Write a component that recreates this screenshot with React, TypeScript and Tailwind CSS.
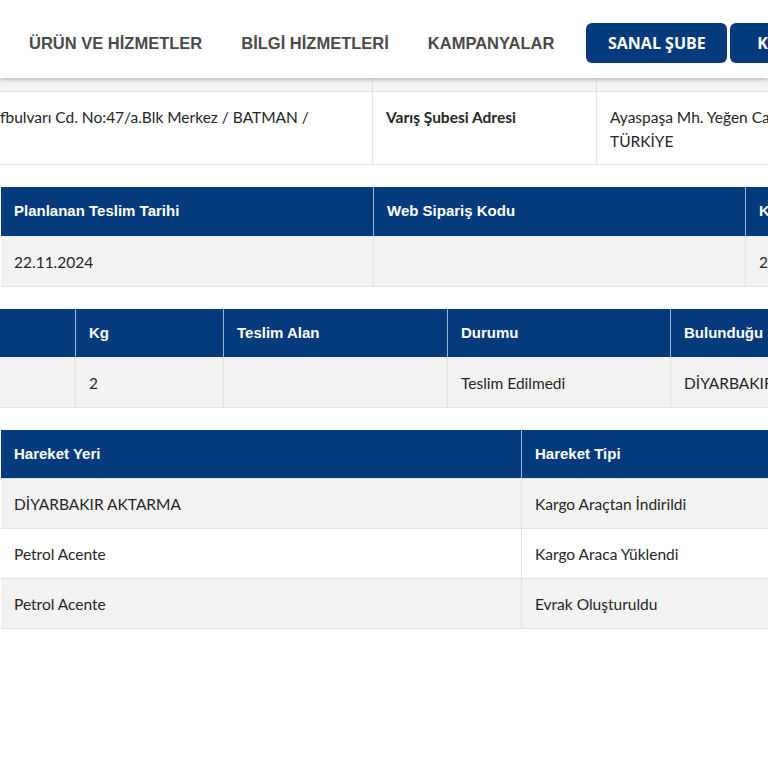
import React from "react";

const HEAD =
  "bg-[#053b7c] text-white font-bold text-[15px] leading-6 px-[13px] py-3 border-l border-[#9fb4d3] first:border-l-0 whitespace-nowrap";
const HEAD_TALL =
  "bg-[#053b7c] text-white font-bold text-[15px] leading-6 px-[13px] pt-[12px] pb-[13px] border-l border-[#9fb4d3] first:border-l-0 whitespace-nowrap";
const CELL =
  "px-[13px] pt-[14px] pb-[12px] text-[15.5px] leading-6 text-[#262626] border-l border-[#e2e2e2] first:border-l-0 whitespace-nowrap";
const ROW_CELL =
  "px-[13px] pt-[13px] pb-[12px] text-[15.5px] leading-6 text-[#262626] border-l border-[#e2e2e2] first:border-l-0 whitespace-nowrap";
const HEAD_FONT = { fontFamily: '"Liberation Sans", Arial, sans-serif' };

function Nav() {
  return (
    <header
      className="relative z-10 h-[78px] bg-white shadow-[0_2px_4px_rgba(0,0,0,0.22)] flex items-center pt-[8px]"
      style={{ fontFamily: '"Liberation Sans", Arial, sans-serif' }}
    >
      <nav className="flex items-center pl-[29px] gap-[39px] text-[16.5px] font-bold text-[#4a4a4a] whitespace-nowrap">
        <span>ÜRÜN VE HİZMETLER</span>
        <span>BİLGİ HİZMETLERİ</span>
        <span>KAMPANYALAR</span>
      </nav>
      <div className="flex items-center gap-[3px] ml-[32px] whitespace-nowrap">
        <span
          className="h-10 w-[141px] rounded-[6px] bg-[#053b7c] text-white font-bold text-[16px] flex items-center justify-center"
          style={{ fontFamily: '"Open Sans", sans-serif' }}
        >
          SANAL ŞUBE
        </span>
        <span
          className="h-10 w-[141px] rounded-[6px] bg-[#053b7c] text-white font-bold text-[16px] flex items-center pl-[27px]"
          style={{ fontFamily: '"Open Sans", sans-serif' }}
        >
          KURUMSAL
        </span>
      </div>
    </header>
  );
}

export default function App() {
  return (
    <div
      className="w-[768px] h-[768px] overflow-hidden bg-white"
      style={{ fontFamily: 'Lato, "Noto Sans", sans-serif' }}
    >
      <Nav />

      {/* address block */}
      <div className="w-[1100px]">
        <div className="grid grid-cols-[372px_224px_1fr] h-[14px] bg-[#f3f3f3] border-b border-[#e2e2e2]">
          <div />
          <div className="border-l border-[#e2e2e2]" />
          <div className="border-l border-[#e2e2e2]" />
        </div>
        <div className="grid grid-cols-[372px_224px_1fr] border-b border-[#e2e2e2] bg-white">
          <div className="pt-[13px] pb-[11px] text-[15.5px] leading-6 text-[#262626] whitespace-nowrap">
            fbulvarı Cd. No:47/a.Blk Merkez / BATMAN /
          </div>
          <div className="px-[13px] pt-[13px] pb-[11px] text-[15.5px] leading-6 text-[#262626] font-bold border-l border-[#e2e2e2]">
            Varış Şubesi Adresi
          </div>
          <div className="px-[13px] pt-[13px] pb-[11px] text-[15.5px] leading-6 text-[#262626] border-l border-[#e2e2e2]">
            <div className="whitespace-nowrap">Ayaspaşa Mh. Yeğen Cad. No:12 Beyoğlu / İSTANBUL /</div>
            <div>TÜRKİYE</div>
          </div>
        </div>
      </div>

      {/* delivery date */}
      <div className="mt-[22px] ml-px w-[1100px] border-b border-[#e2e2e2]">
        <div className="grid grid-cols-[372px_372px_1fr]" style={HEAD_FONT}>
          <div className={HEAD_TALL}>Planlanan Teslim Tarihi</div>
          <div className={HEAD_TALL}>Web Sipariş Kodu</div>
          <div className={HEAD_TALL}>Kargo Takip No</div>
        </div>
        <div className="grid grid-cols-[372px_372px_1fr] bg-[#f2f2f2]">
          <div className={CELL}>22.11.2024</div>
          <div className={CELL}>&nbsp;</div>
          <div className={CELL}>2</div>
        </div>
      </div>

      {/* shipment summary */}
      <div className="mt-[22px] w-[1100px] border-b border-[#e2e2e2]">
        <div className="grid grid-cols-[75px_148px_224px_223px_1fr]" style={HEAD_FONT}>
          <div className={HEAD}>&nbsp;</div>
          <div className={HEAD}>Kg</div>
          <div className={HEAD}>Teslim Alan</div>
          <div className={HEAD}>Durumu</div>
          <div className={HEAD}>Bulunduğu Şube</div>
        </div>
        <div className="grid grid-cols-[75px_148px_224px_223px_1fr] bg-[#f2f2f2]">
          <div className={CELL}>&nbsp;</div>
          <div className={CELL}>2</div>
          <div className={CELL}>&nbsp;</div>
          <div className={CELL}>Teslim Edilmedi</div>
          <div className={CELL}>DİYARBAKIR AKTARMA</div>
        </div>
      </div>

      {/* movement history */}
      <div className="mt-[22px] ml-px w-[1100px] border-b border-[#e2e2e2]">
        <div className="grid grid-cols-[520px_1fr]" style={HEAD_FONT}>
          <div className={HEAD}>Hareket Yeri</div>
          <div className={HEAD}>Hareket Tipi</div>
        </div>
        {[
          ["DİYARBAKIR AKTARMA", "Kargo Araçtan İndirildi", "bg-[#f2f2f2]"],
          ["Petrol Acente", "Kargo Araca Yüklendi", "bg-white"],
          ["Petrol Acente", "Evrak Oluşturuldu", "bg-[#f2f2f2]"],
        ].map(([place, kind, bg], i) => (
          <div
            key={i}
            className={`grid grid-cols-[520px_1fr] border-t border-[#e2e2e2] first:border-t-0 ${bg}`}
          >
            <div className={ROW_CELL}>{place}</div>
            <div className={ROW_CELL}>{kind}</div>
          </div>
        ))}
      </div>
    </div>
  );
}
